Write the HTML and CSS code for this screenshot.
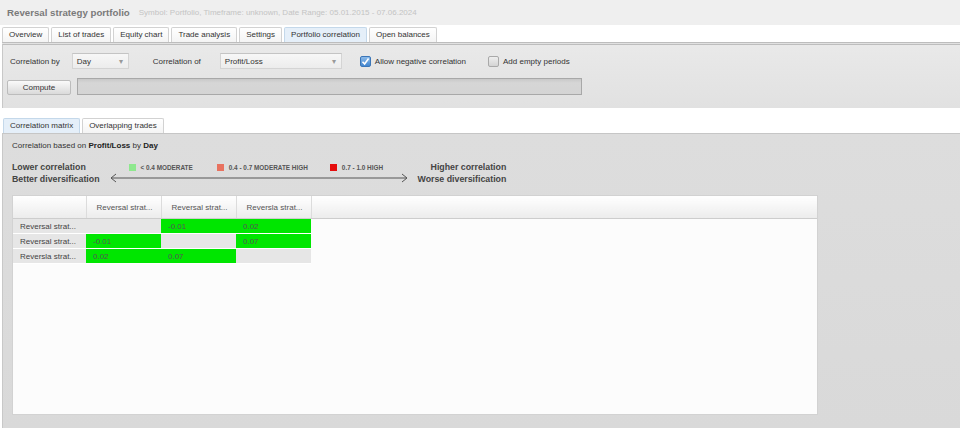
FILE: index.html
```html
<!DOCTYPE html>
<html lang="en">
<head>
    <meta charset="UTF-8">
    <meta name="viewport" content="width=device-width, initial-scale=1.0">
    <title>Reversal strategy portfolio</title>
    <link rel="stylesheet" href="styles.css">
</head>
<body>
    <div class="header">
        <span class="title">Reversal strategy portfolio</span>
        <span class="meta">Symbol: Portfolio, Timeframe: unknown, Date Range: 05.01.2015 - 07.06.2024</span>
    </div>
    <div class="tabs">
        <div class="tab">Overview</div>
        <div class="tab">List of trades</div>
        <div class="tab">Equity chart</div>
        <div class="tab">Trade analysis</div>
        <div class="tab">Settings</div>
        <div class="tab active">Portfolio correlation</div>
        <div class="tab">Open balances</div>
    </div>
    <div class="panel settings">
        <div class="row options">
            <span class="lbl">Correlation by</span>
            <div class="select sel-day"><span>Day</span><span class="caret">&#9662;</span></div>
            <span class="lbl lbl-of">Correlation of</span>
            <div class="select sel-of"><span>Profit/Loss</span><span class="caret">&#9662;</span></div>
            <span class="check checked">
                <svg width="9" height="9" viewBox="0 0 9 9"><path d="M1.5 4.8 L3.6 7 L7.6 1.6" fill="none" stroke="#fff" stroke-width="1.6"/></svg>
            </span>
            <span class="lbl check-lbl">Allow negative correlation</span>
            <span class="check check-2"></span>
            <span class="lbl check-lbl">Add empty periods</span>
        </div>
        <div class="row actions">
            <button class="compute">Compute</button>
            <div class="progress"></div>
        </div>
    </div>
    <div class="subtabs">
        <div class="tab active">Correlation matrix</div>
        <div class="tab">Overlapping trades</div>
    </div>
    <div class="panel result">
        <p class="based">Correlation based on <b>Profit/Loss</b> by <b>Day</b></p>
        <div class="legend">
            <div class="side">
                <b>Lower correlation</b>
                <b>Better diversification</b>
            </div>
            <div class="scale">
                <div class="keys">
                    <span class="key"><i class="sq sq-low"></i>&lt; 0.4 MODERATE</span>
                    <span class="key key-mid"><i class="sq sq-mid"></i>0.4 - 0.7 MODERATE HIGH</span>
                    <span class="key key-high"><i class="sq sq-high"></i>0.7 - 1.0 HIGH</span>
                </div>
                <svg class="arrow" width="301" height="10" viewBox="0 0 301 10">
                    <path d="M2 5 H298 M7 1 L2 5 L7 9 M293 1 L298 5 L293 9" fill="none" stroke="#555" stroke-width="1"/>
                </svg>
            </div>
            <div class="side right">
                <b>Higher correlation</b>
                <b>Worse diversification</b>
            </div>
        </div>
        <div class="matrix">
            <table>
                <colgroup>
                    <col class="c-name"><col class="c-val"><col class="c-val"><col class="c-val"><col>
                </colgroup>
                <thead>
                    <tr>
                        <th></th>
                        <th>Reversal strat...</th>
                        <th>Reversal strat...</th>
                        <th>Reversla strat...</th>
                        <th class="fill"></th>
                    </tr>
                </thead>
                <tbody>
                    <tr>
                        <td class="name">Reversal strat...</td>
                        <td></td>
                        <td class="low">-0.01</td>
                        <td class="low">0.02</td>
                        <td class="fill"></td>
                    </tr>
                    <tr>
                        <td class="name">Reversal strat...</td>
                        <td class="low">-0.01</td>
                        <td></td>
                        <td class="low">0.07</td>
                        <td class="fill"></td>
                    </tr>
                    <tr>
                        <td class="name">Reversla strat...</td>
                        <td class="low">0.02</td>
                        <td class="low">0.07</td>
                        <td></td>
                        <td class="fill"></td>
                    </tr>
                </tbody>
            </table>
        </div>
    </div>
</body>
</html>
```

FILE: styles.css
```css
body {
    margin: 0;
    width: 960px;
    height: 428px;
    overflow: hidden;
    font-family: "Liberation Sans", Arial, sans-serif;
    font-size: 8px;
    color: #333;
    background-color: #fff;
}
.header {
    height: 25px;
    display: flex;
    align-items: center;
    gap: 9px;
    padding-left: 7px;
    background-color: #efefef;
}
.title {
    font-size: 9.7px;
    font-weight: bold;
    color: #7a7a7a;
}
.meta {
    color: #c4c4c4;
}
.tabs, .subtabs {
    display: flex;
    gap: 2px;
    height: 15px;
    background-color: #fff;
}
.tabs {
    padding: 2px 0 0 2px;
}
.subtabs {
    padding: 10px 0 0 3px;
}
.tab {
    height: 14px;
    line-height: 14px;
    padding: 0 6px;
    border: 1px solid #d2d2d2;
    border-bottom: none;
    border-radius: 2px 2px 0 0;
    background: linear-gradient(#fff, #f4f4f4);
    color: #333;
}
.tab.active {
    background: #e5eff9;
    border-color: #c4d8ea;
}
.panel {
    margin-left: 2px;
    border-left: 1px solid #c8c8c8;
}
.settings {
    border-top: 3px double #bdbdbd;
    background: linear-gradient(#e9e9e9, #e1e1e1);
    padding: 8px 0 13px 4px;
}
.row {
    display: flex;
}
.options {
    height: 16px;
    align-items: center;
    padding-left: 3px;
}
.lbl {
    color: #333;
}
.select {
    box-sizing: border-box;
    height: 16px;
    display: flex;
    align-items: center;
    justify-content: space-between;
    padding: 0 5px 0 4px;
    border: 1px solid #d4d4d4;
    border-top-color: #c4c4c4;
    background: linear-gradient(#f7f7f7, #ececec);
    color: #333;
}
.caret {
    color: #999;
    font-size: 8px;
}
.sel-day {
    width: 57px;
    margin-left: 12px;
}
.lbl-of {
    margin-left: 24px;
}
.sel-of {
    width: 122px;
    margin-left: 19px;
}
.check {
    box-sizing: border-box;
    width: 11px;
    height: 11px;
    margin-left: 18px;
    border: 1px solid #a9a9a9;
    border-radius: 2px;
    background: linear-gradient(#eee, #d4d4d4);
    display: flex;
    align-items: center;
    justify-content: center;
}
.check.checked {
    border-color: #3b76b8;
    background: linear-gradient(#8dbbe9, #4286d0);
}
.check-2 {
    margin-left: 22px;
}
.check-lbl {
    margin-left: 4px;
}
.actions {
    height: 17px;
    margin-top: 9px;
    align-items: flex-end;
}
.compute {
    box-sizing: border-box;
    width: 64px;
    height: 15px;
    padding: 0;
    border: 1px solid #bcbcbc;
    border-radius: 2px;
    background: linear-gradient(#fafafa, #dadada);
    font-family: inherit;
    font-size: 8px;
    color: #333;
}
.progress {
    box-sizing: border-box;
    width: 505px;
    height: 17px;
    margin-left: 6px;
    border: 1px solid #a8a8a8;
    background: linear-gradient(#c8c8c8, #d6d6d6 4px, #d4d4d4);
}
.result {
    border-top: 1px solid #c6c6c6;
    background: linear-gradient(#dddddd, #d9d9d9);
    padding: 6px 0 13px 9px;
}
.based {
    margin: 0;
    line-height: 12px;
    color: #333;
}
.based b {
    color: #222;
}
.legend {
    display: flex;
    margin-top: 9px;
    height: 24px;
}
.side {
    display: flex;
    flex-direction: column;
    font-size: 8.8px;
    line-height: 12px;
    color: #444;
}
.side.right {
    align-items: flex-end;
}
.scale {
    width: 301px;
    margin: 0 8px 0 9px;
}
.keys {
    height: 12px;
    display: flex;
    align-items: center;
    padding-left: 20px;
    font-size: 6.4px;
    font-weight: bold;
    color: #555;
}
.key {
    display: flex;
    align-items: center;
    gap: 5px;
}
.key-mid {
    margin-left: 24px;
}
.key-high {
    margin-left: 22px;
}
.sq {
    width: 7px;
    height: 7px;
}
.sq-low {
    background-color: #8ee88e;
}
.sq-mid {
    background-color: #e8725f;
}
.sq-high {
    background-color: #e50d0d;
}
.arrow {
    display: block;
}
.matrix {
    box-sizing: border-box;
    width: 806px;
    height: 220px;
    margin-top: 10px;
    border: 1px solid #d2d2d2;
    background-color: #fcfcfc;
}
table {
    width: 100%;
    border-collapse: collapse;
    table-layout: fixed;
}
.c-name {
    width: 73px;
}
.c-val {
    width: 75px;
}
th {
    height: 22px;
    padding: 0 0 0 10px;
    text-align: left;
    font-weight: normal;
    color: #555;
    border-right: 1px solid #dcdcdc;
    border-bottom: 1px solid #cdcdcd;
    background: linear-gradient(#fff, #ececec);
}
th.fill {
    border-right: none;
}
td {
    height: 14px;
    padding: 0 0 0 7px;
    border-bottom: 1px solid #fff;
    background-color: #e6e6e6;
    color: #666;
    white-space: nowrap;
}
td.name {
    padding-left: 7px;
    color: #444;
}
td.low {
    background-color: #00e600;
    color: #555;
}
td.fill {
    background-color: transparent;
    border-bottom: none;
}
```
